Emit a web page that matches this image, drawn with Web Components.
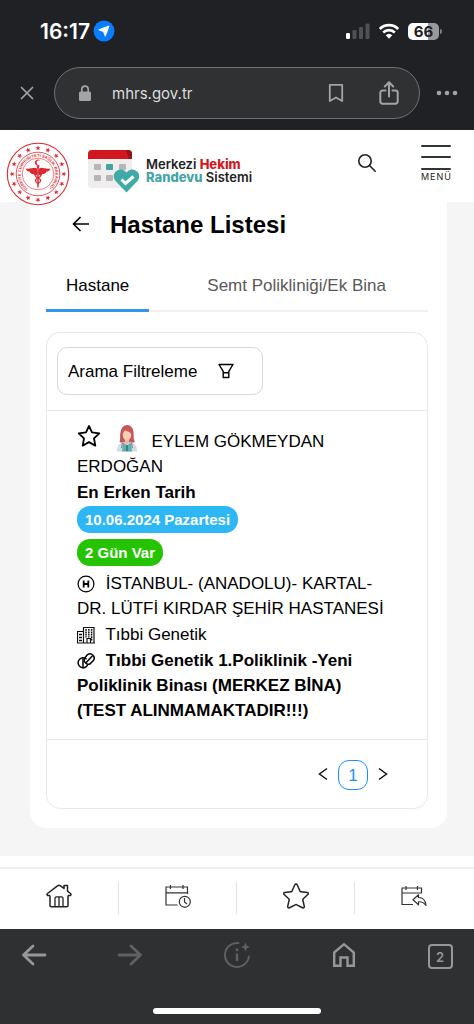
<!DOCTYPE html>
<html lang="tr">
<head>
<meta charset="utf-8">
<meta name="viewport" content="width=device-width, initial-scale=1">
<title>Hastane Listesi</title>
<style>
    body {
        margin: 0;
        background: #f5f5f5;
        color: #000;
        font-family: "Liberation Sans", Arial, sans-serif;
        font-size: 17px;
        line-height: 25px;
    }
</style>
</head>
<body>
<hospital-app></hospital-app>

<script>
// Every line icon: [viewBox, markup]
const ICONS = {
    location: ['0 0 22 22', '<circle cx="11" cy="11" r="10.5" fill="#0a7cff"/><path d="M16 6 12.3 16.2 10.6 11.6 5.8 9.8Z" fill="#fff" stroke="#fff" stroke-width="1" stroke-linejoin="round"/>'],
    signal: ['0 0 24 16', '<rect x="0" y="10" width="4" height="6" rx="1.3" fill="#fff"/><g fill="#505154"><rect x="6.5" y="7" width="4" height="9" rx="1.3"/><rect x="13" y="4" width="4" height="12" rx="1.3"/><rect x="19.5" y="0.5" width="4" height="15.5" rx="1.3"/></g>'],
    wifi: ['0 0 22 16', '<g fill="none" stroke="#fff" stroke-width="2.7"><path d="M1.8 6A13 13 0 0 1 20.2 6"/><path d="M5.2 9.5A8.3 8.3 0 0 1 16.8 9.5"/></g><path d="M7.7 12.2A4.8 4.8 0 0 1 14.3 12.2L11 15.7Z" fill="#fff"/>'],
    close: ['0 0 14 14', '<path d="M1.5 1.5 12.5 12.5M12.5 1.5 1.5 12.5" fill="none" stroke="currentColor" stroke-width="1.7" stroke-linecap="round"/>'],
    lock: ['0 0 14 16', '<rect x="1" y="6.5" width="12" height="9.5" rx="1.6" fill="currentColor"/><path d="M3.8 7V4.3a3.2 3.2 0 0 1 6.4 0V7" fill="none" stroke="currentColor" stroke-width="1.7"/>'],
    bookmark: ['0 0 16 20', '<path d="M1.8 1.8H14.2V18L8 14.5 1.8 18Z" fill="none" stroke="currentColor" stroke-width="1.8" stroke-linejoin="round"/>'],
    share: ['0 0 20 24', '<g fill="none" stroke="currentColor" stroke-width="2" stroke-linecap="round" stroke-linejoin="round"><path d="M6.5 9.5H3.5A2.2 2.2 0 0 0 1.3 11.7V20.5A2.2 2.2 0 0 0 3.5 22.7H16.5A2.2 2.2 0 0 0 18.7 20.5V11.7A2.2 2.2 0 0 0 16.5 9.5H13.5"/><path d="M10 15.5V1.5M5.8 5.5 10 1.3 14.2 5.5"/></g>'],
    dots: ['0 0 22 6', '<g fill="currentColor"><circle cx="3" cy="3" r="2.3"/><circle cx="11" cy="3" r="2.3"/><circle cx="19" cy="3" r="2.3"/></g>'],
    search: ['0 0 20 20', '<g fill="none" stroke="#222" stroke-width="1.6" stroke-linecap="round"><circle cx="8" cy="8" r="6.2"/><path d="M12.5 12.5 18.2 18.2"/></g>'],
    menu: ['0 0 30 27', '<path d="M1 2H29M1 13H29M1 25H29" stroke="#2f3633" stroke-width="2" stroke-linecap="round"/>'],
    back: ['0 0 18 18', '<path d="M17 9H1.5M8.5 2 1.5 9 8.5 16" fill="none" stroke="#000" stroke-width="1.6"/>'],
    filter: ['0 0 16 16', '<path d="M1 1.5H15L10.8 8.3V14.5H5.2V8.3ZM5.2 9.8H10.8" fill="none" stroke="#000" stroke-width="1.4" stroke-linejoin="round"/>'],
    star: ['0 0 24 24', '<path d="M12 2 15 8.4 22.3 9.4 17 14.3 18.3 21.6 12 18.1 5.7 21.6 7 14.3 1.7 9.4 9 8.4Z" fill="none" stroke="#000" stroke-width="1.8" stroke-linejoin="round"/>'],
    doctor: ['0 0 22 28', '<path d="M3.5 18C5 15 3 8.5 6 4 8.5 0 14 0 16.5 4.5 18.8 9 16.5 14.5 19 18 16 19.5 6 19.5 3.5 18Z" fill="#c4555c"/><path d="M1 27.5C1 21.5 3.5 19 8 18.3H14C18.5 19 21 21.5 21 27.5Z" fill="#d3dcdf"/><path d="M7 18.5 11 21.5 15 18.5 16 27.5H6Z" fill="#5fb0b2"/><path d="M8.8 14H13.2V18.5L11 21 8.8 18.5Z" fill="#eeb59b"/><ellipse cx="11" cy="10.8" rx="4.3" ry="5.5" fill="#f8cdb5"/><path d="M6.5 10C7.5 8.5 8 7 9 6.3 11 7.5 13.5 7 15.5 10.5 16.5 3.5 13.5 2.5 11 2.5 8 2.5 5.5 4.5 6.5 10Z" fill="#c9575b"/><path d="M11 21V27" stroke="#265d70" stroke-width="1.2"/><path d="M6.5 19 5.5 24M15.5 19 16.5 24" stroke="#6c8790" stroke-width="1" fill="none"/>'],
    hospital: ['0 0 18 18', '<circle cx="9" cy="9" r="7.9" fill="none" stroke="#000" stroke-width="1.2"/><path d="M6.7 5.5V12.5M11.3 5.5V12.5M6.7 9H11.3" stroke="#000" stroke-width="1.8" fill="none"/>'],
    building: ['0 0 18 18', '<g fill="none" stroke="#111" stroke-width="1.2"><path d="M6.5 17V1.5H17V17M.5 17V5.5H6.5M0 17H18M10 17V12.5H13.5V17"/><path d="M2 8.5H5M2 11.5H5M2 14.5H5" stroke-width="1.5"/><path d="M9 3V11.5M11.8 3V11.5M14.6 3V15" stroke-width="1.5" stroke-dasharray="1.8 .6"/></g>'],
    pills: ['0 0 18 18', '<g fill="none" stroke="#000" stroke-width="1.5"><path d="M9.6 7.2A5 5 0 1 0 10.8 12.6"/><path d="M6 6.2V16.2"/><path d="M8 5.8 10.3 2.9A4.2 4.2 0 0 1 16.2 8.8L12.8 12.1A4.2 4.2 0 0 1 8 5.8"/><path d="M9 10.8 15.3 4"/></g>'],
    prev: ['0 0 10 14', '<path d="M9 1.5 1.5 7 9 12.5" fill="none" stroke="#111" stroke-width="1.5"/>'],
    next: ['0 0 10 14', '<path d="M1 1.5 8.5 7 1 12.5" fill="none" stroke="#111" stroke-width="1.5"/>'],
    house: ['0 0 26 24', '<g fill="none" stroke="#222" stroke-width="1.5" stroke-linejoin="round"><path d="M4 11.5V21.5Q4 22.8 5.3 22.8H20.7Q22 22.8 22 21.5V11.5"/><path d="M4 11.5H1.5Q.5 10.5 1.5 9.5L11.5 1.8Q13 .8 14.5 1.8L18 4.5V1.5H21.5V7.2L24.5 9.5Q25.5 10.5 24.5 11.5H22"/><path d="M9 22.5V14.3Q9 12.8 10.5 12.8H15.5Q17 12.8 17 14.3V22.5M13 13V22.5" stroke-width="1.3"/></g>'],
    calendarClock: ['0 0 26 24', '<g fill="none" stroke="#333" stroke-width="1.2"><path d="M12.5 21H1V3H22.5V10M1 8.8H22.5M5.5 1V5M18 1V5"/><circle cx="19.8" cy="17.8" r="5.5"/><path d="M19.5 14V18L22 20"/></g>'],
    softStar: ['0 0 26 26', '<path d="M11.8 1.8Q13 0 14.2 1.8L16.8 7.8Q17.2 8.6 18 8.7L24.3 9.5Q26.2 10 24.8 11.5L20.3 15.7Q19.6 16.5 19.9 17.3L21.3 23.3Q21.4 25.4 19.5 24.7L13.8 21.8Q13 21.3 12.2 21.8L6.5 24.7Q4.6 25.4 4.7 23.3L6.1 17.3Q6.4 16.5 5.7 15.7L1.2 11.5Q-.2 10 1.7 9.5L8 8.7Q8.8 8.6 9.2 7.8Z" fill="none" stroke="#222" stroke-width="1.5"/>'],
    calendarBack: ['0 0 26 24', '<g fill="none" stroke="#333" stroke-width="1.2"><path d="M12 20.5H1V4H20.5V9.5M1 9H20.5M5 2V6M16.5 2V6"/><path d="M12 15.8 17.5 10.8V13.5C22 13.5 24.5 16 25 21.5 22.8 18.5 20.5 17.5 17.5 17.8V20.8Z" stroke-linejoin="round"/></g>'],
    left: ['0 0 26 24', '<path d="M24 12H2.5M12 3 2.5 12 12 21" fill="none" stroke="currentColor" stroke-width="2.8" stroke-linecap="round" stroke-linejoin="round"/>'],
    right: ['0 0 26 24', '<path d="M2 12H23.5M14 3 23.5 12 14 21" fill="none" stroke="currentColor" stroke-width="2.8" stroke-linecap="round" stroke-linejoin="round"/>'],
    assist: ['0 0 28 28', '<path d="M15.5 2.1A12 12 0 1 0 25.9 15.5" fill="none" stroke="currentColor" stroke-width="1.9" stroke-linecap="round"/><path d="M14 12.5V20" stroke="currentColor" stroke-width="2.4"/><circle cx="14" cy="8.8" r="1.5" fill="currentColor"/><path d="M22.5 1.5 23.8 4.7 27 6 23.8 7.3 22.5 10.5 21.2 7.3 18 6 21.2 4.7Z" fill="currentColor"/>'],
    home: ['0 0 24 26', '<path d="M2.2 10.5 12 2.2 21.8 10.5V23.8H15.5V15.5H8.5V23.8H2.2Z" fill="none" stroke="currentColor" stroke-width="2.4"/>'],
    calendarHeart: ['0 0 52 44', '<rect x="0" y="1" width="44" height="38" rx="4" fill="#efedee"/><path d="M0 10V5Q0 1 4 1H40Q44 1 44 5V10Z" fill="#d2171e"/><path d="M38 1H40Q44 1 44 5V10H41Z" fill="#94161b"/><g fill="#b6b6b8"><rect x="6" y="15" width="7" height="6" rx="1"/><rect x="31" y="15" width="7" height="6" rx="1"/><rect x="6" y="26" width="7" height="6" rx="1"/><rect x="18" y="26" width="7" height="6" rx="1"/></g><rect x="18" y="15" width="7" height="6" rx="1" fill="#43a5a3"/><path d="M38.5 43.5 27.5 32C23 26 28 20 33.5 20.5Q36.5 21 38.5 23.5 40.5 21 43.5 20.5C49 20 54 26 49.5 32Z" fill="#40aaa6"/><path d="M33.5 30.5 37.5 34.5 45.5 27.5" fill="none" stroke="#fff" stroke-width="3"/>']
};

class UiIcon extends HTMLElement {
    connectedCallback() {
        const [box, body] = ICONS[this.getAttribute('name')];
        const [, , w, h] = box.split(' ');
        this.attachShadow({ mode: 'open' });
        this.shadowRoot.innerHTML = `
            <style>
                :host { display: inline-block; flex: none; line-height: 0; }
                svg { display: block; }
            </style>
            <svg viewBox="${box}" width="${w}" height="${h}" aria-hidden="true">${body}</svg>
        `;
    }
}

class StatusBar extends HTMLElement {
    connectedCallback() {
        this.attachShadow({ mode: 'open' });
        this.shadowRoot.innerHTML = `
            <style>
                :host {
                    display: flex;
                    align-items: center;
                    justify-content: space-between;
                    height: 62px;
                    padding: 0 32px 0 40px;
                    background: #202125;
                    color: #fff;
                    font-family: Inter, sans-serif;
                }
                div { display: flex; align-items: center; }
                .time { gap: 3px; font-size: 21px; font-weight: 600; }
                .state { gap: 8px; }
                .battery {
                    width: 31px;
                    border-radius: 5px;
                    background: linear-gradient(90deg, #fff 66%, #98999b 66%);
                    color: #202125;
                    font-size: 15px;
                    font-weight: 700;
                    line-height: 17px;
                    justify-content: center;
                }
                .cell { gap: 1px; }
                .tip { width: 2px; height: 5px; border-radius: 0 2px 2px 0; background: #7d7e81; }
            </style>
            <div class="time"><span>16:17</span><ui-icon name="location"></ui-icon></div>
            <div class="state">
                <ui-icon name="signal"></ui-icon>
                <ui-icon name="wifi"></ui-icon>
                <div class="cell"><div class="battery">66</div><div class="tip"></div></div>
            </div>
        `;
    }
}

class AddressBar extends HTMLElement {
    connectedCallback() {
        this.attachShadow({ mode: 'open' });
        this.shadowRoot.innerHTML = `
            <style>
                :host {
                    display: grid;
                    grid-template-columns: 54px minmax(0, 1fr) 54px;
                    align-items: center;
                    padding: 5px 0 11px;
                    background: #202125;
                    color: #a3a4a8;
                }
                button {
                    display: flex;
                    justify-content: center;
                    padding: 0;
                    border: 0;
                    background: none;
                    color: inherit;
                }
                .field {
                    display: flex;
                    align-items: center;
                    box-sizing: border-box;
                    height: 52px;
                    padding: 0 20px 0 23px;
                    border: 1px solid #707174;
                    border-radius: 26px;
                    background: #303133;
                }
                input {
                    flex: 1;
                    min-width: 0;
                    margin-left: 20px;
                    padding: 0;
                    border: 0;
                    background: none;
                    color: #dcdddf;
                    font: 15px Inter, sans-serif;
                }
                .share { margin-left: 35px; }
            </style>
            <button aria-label="Kapat"><ui-icon name="close"></ui-icon></button>
            <div class="field">
                <ui-icon name="lock"></ui-icon>
                <input type="text" aria-label="Adres" value="mhrs.gov.tr">
                <button aria-label="Yer işareti"><ui-icon name="bookmark"></ui-icon></button>
                <button class="share" aria-label="Paylaş"><ui-icon name="share"></ui-icon></button>
            </div>
            <button aria-label="Diğer"><ui-icon name="dots"></ui-icon></button>
        `;
    }
}

class MinistrySeal extends HTMLElement {
    connectedCallback() {
        // sixteen small stars between the two outer rings
        let stars = '';
        for (let i = 0; i < 16; i++) {
            stars += `<path transform="rotate(${i * 22.5} 32 32) translate(32 6.2) scale(1.2)" d="M0-2.2.6-.7 2.1-.7 .9.3 1.3 1.8 0 .9-1.3 1.8-.9.3-2.1-.7-.6-.7Z"/>`;
        }
        this.attachShadow({ mode: 'open' });
        this.shadowRoot.innerHTML = `
            <style>
                :host { display: block; border-radius: 50%; background: #fff; }
                svg { display: block; }
                text { font: 700 4px "Liberation Sans", sans-serif; }
            </style>
            <svg viewBox="0 0 64 64" width="64" height="64" fill="#dc2a33" role="img" aria-label="Sağlık Bakanlığı">
                <g fill="none" stroke="#dc2a33">
                    <circle cx="32" cy="32" r="30.7" stroke-width="1.1"/>
                    <circle cx="32" cy="32" r="21.8" stroke-width=".8"/>
                    <circle cx="32" cy="32" r="15.8" stroke-width=".6"/>
                </g>
                ${stars}
                <defs><path id="ring" d="M22.3 46.7A17.4 17.4 0 1 1 41.7 46.7"/></defs>
                <text><textPath href="#ring">TÜRKİYE CUMHURİYETİ SAĞLIK BAKANLIĞI</textPath></text>
                <path d="M31 26.5C28 24.5 25 27.5 19.5 26.5 20.5 29 22 29.5 23.5 29.5 24 31.5 26 32 27.5 32 28.5 34 30 33.5 31 33ZM33 26.5C36 24.5 39 27.5 44.5 26.5 43.5 29 42 29.5 40.5 29.5 40 31.5 38 32 36.5 32 35.5 34 34 33.5 33 33Z"/>
                <path d="M31.2 25H32.8V44L32 46.5 31.2 44Z"/>
                <path d="M32 30C27.5 32 29 35 32 36 36 37.5 35 40 32 41.5M32 30C36.5 32 35 35 32 36 28 37.5 29 40 32 41.5" fill="none" stroke="#dc2a33" stroke-width="1.3"/>
                <path d="M34.3 22.5A3 3 0 1 1 34.3 18.8 2.3 2.3 0 1 0 34.3 22.5Z"/>
                <circle cx="32" cy="24.5" r="1.3"/>
            </svg>
        `;
    }
}

class SiteHeader extends HTMLElement {
    connectedCallback() {
        this.attachShadow({ mode: 'open' });
        this.shadowRoot.innerHTML = `
            <style>
                :host {
                    display: flex;
                    align-items: flex-start;
                    position: relative;
                    z-index: 1;
                    box-sizing: border-box;
                    height: 72px;
                    padding: 12px 22px 0 6px;
                    background: #fff;
                }
                .brand {
                    display: flex;
                    align-items: center;
                    gap: 6px;
                    margin: 7px auto 0 18px;
                    color: #222;
                    text-decoration: none;
                    font: 600 13px/13px Inter, sans-serif;
                }
                .brand span span { display: block; }
                .brand b { color: #d2171e; font-weight: 800; }
                .brand .teal { color: #43a5a3; }
                button {
                    display: flex;
                    flex-direction: column;
                    align-items: center;
                    padding: 0;
                    border: 0;
                    background: none;
                    color: #222;
                    font: 9px/10px Inter, sans-serif;
                }
                .search { margin: 11px 44px 0 0; }
                .menu { gap: 1px; margin-top: 2px; letter-spacing: 1px; }
            </style>
            <ministry-seal></ministry-seal>
            <a class="brand" href="#">
                <ui-icon name="calendarHeart"></ui-icon>
                <span>
                    <span>Merkezi <b>Hekim</b></span>
                    <span><b class="teal">Randevu</b> Sistemi</span>
                </span>
            </a>
            <button class="search" aria-label="Ara"><ui-icon name="search"></ui-icon></button>
            <button class="menu"><ui-icon name="menu"></ui-icon>MENÜ</button>
        `;
    }
}

class TabBar extends HTMLElement {
    connectedCallback() {
        this.attachShadow({ mode: 'open' });
        this.shadowRoot.innerHTML = `
            <style>
                :host {
                    display: flex;
                    gap: 38px;
                    box-shadow: inset 0 -2px #f0f0f0;
                }
                ::slotted(button) {
                    padding: 13px 20px 11px;
                    border: 0;
                    border-bottom: 3px solid transparent;
                    background: none;
                    color: #595959;
                    font: inherit;
                }
                ::slotted(button[aria-selected="true"]) {
                    border-color: #3294ea;
                    color: #000;
                }
            </style>
            <slot></slot>
        `;
    }
}

class DateBadge extends HTMLElement {
    connectedCallback() {
        this.attachShadow({ mode: 'open' });
        this.shadowRoot.innerHTML = `
            <style>
                :host {
                    display: block;
                    width: fit-content;
                    padding: 0 8px;
                    border-radius: 13px;
                    background: #2db7f5;
                    color: #fff;
                    font-size: 15px;
                    font-weight: 700;
                    line-height: 27px;
                }
                :host([tone="green"]) { background: #26c400; }
            </style>
            <slot></slot>
        `;
    }
}

class AppointmentCard extends HTMLElement {
    connectedCallback() {
        this.attachShadow({ mode: 'open' });
        this.shadowRoot.innerHTML = `
            <style>
                :host {
                    display: flex;
                    flex-direction: column;
                    gap: 1px;
                    padding: 13px 36px 16px 30px;
                }
                .badges {
                    display: grid;
                    gap: 6px;
                    padding-bottom: 4px;
                }
                .star {
                    padding: 0;
                    border: 0;
                    background: none;
                    vertical-align: -1px;
                }
                .doctor { margin: 0 9px 0 10px; vertical-align: -5px; }
                .mark { margin-right: 6px; vertical-align: -4px; }
            </style>
            <div>
                <button class="star" aria-label="Favorilere ekle"><ui-icon name="star"></ui-icon></button>
                <ui-icon class="doctor" name="doctor"></ui-icon>
                <slot name="doctor"></slot>
            </div>
            <b>En Erken Tarih</b>
            <div class="badges"><slot name="badge"></slot></div>
            <div><ui-icon class="mark" name="hospital"></ui-icon> <slot name="hospital"></slot></div>
            <div><ui-icon class="mark" name="building"></ui-icon> <slot name="clinic"></slot></div>
            <b><ui-icon class="mark" name="pills"></ui-icon> <slot name="room"></slot></b>
        `;
    }
}

class PageSwitcher extends HTMLElement {
    connectedCallback() {
        this.attachShadow({ mode: 'open' });
        this.shadowRoot.innerHTML = `
            <style>
                :host {
                    display: flex;
                    align-items: center;
                    justify-content: flex-end;
                    gap: 10px;
                    padding: 20px 39px 18px;
                    border-top: 1px solid #e8e8e8;
                }
                button { display: block; padding: 0; border: 0; background: none; }
                .current {
                    box-sizing: border-box;
                    width: 30px;
                    height: 30px;
                    border: 1px solid #1890ff;
                    border-radius: 11px;
                    color: #1890ff;
                    font: inherit;
                }
            </style>
            <button aria-label="Önceki"><ui-icon name="prev"></ui-icon></button>
            <button class="current">1</button>
            <button aria-label="Sonraki"><ui-icon name="next"></ui-icon></button>
        `;
    }
}

class SiteNav extends HTMLElement {
    connectedCallback() {
        this.attachShadow({ mode: 'open' });
        this.shadowRoot.innerHTML = `
            <style>
                :host { display: block; padding-top: 11px; background: #fff; }
                nav {
                    display: grid;
                    grid-template-columns: repeat(4, 1fr);
                    padding: 13px 2px 15px 0;
                    border-top: 2px solid #f0f0f0;
                }
                a {
                    display: flex;
                    align-items: center;
                    justify-content: center;
                    box-sizing: border-box;
                    height: 32px;
                    padding-bottom: 4px;
                }
                a + a { border-left: 1px solid #e2e2e2; }
            </style>
            <nav>
                <a href="#" aria-label="Ana sayfa"><ui-icon name="house"></ui-icon></a>
                <a href="#" aria-label="Randevularım"><ui-icon name="calendarClock"></ui-icon></a>
                <a href="#" aria-label="Favoriler"><ui-icon name="softStar"></ui-icon></a>
                <a href="#" aria-label="Geçmiş"><ui-icon name="calendarBack"></ui-icon></a>
            </nav>
        `;
    }
}

class BrowserToolbar extends HTMLElement {
    connectedCallback() {
        this.attachShadow({ mode: 'open' });
        this.shadowRoot.innerHTML = `
            <style>
                :host { display: block; padding-bottom: 10px; background: #2f3032; color: #96979b; }
                .row {
                    display: grid;
                    grid-template-columns: 68fr 124fr 90fr 124fr 68fr;
                    align-items: center;
                    justify-items: center;
                    height: 55px;
                }
                button {
                    display: block;
                    padding: 0;
                    border: 0;
                    background: none;
                    color: inherit;
                }
                .dim { color: #606164; }
                .tabs {
                    box-sizing: border-box;
                    width: 25px;
                    height: 25px;
                    border: 2px solid;
                    border-radius: 4px;
                    font: 600 13px/20px Inter, sans-serif;
                }
                .handle {
                    width: 168px;
                    height: 6px;
                    margin: 24px auto 0;
                    border-radius: 3px;
                    background: #fff;
                }
            </style>
            <div class="row">
                <button aria-label="Geri"><ui-icon name="left"></ui-icon></button>
                <button class="dim" aria-label="İleri"><ui-icon name="right"></ui-icon></button>
                <button class="dim" aria-label="Asistan"><ui-icon name="assist"></ui-icon></button>
                <button aria-label="Ana ekran"><ui-icon name="home"></ui-icon></button>
                <button class="tabs">2</button>
            </div>
            <div class="handle"></div>
        `;
    }
}

class HospitalApp extends HTMLElement {
    connectedCallback() {
        this.attachShadow({ mode: 'open' });
        this.shadowRoot.innerHTML = `
            <style>
                :host { display: flex; flex-direction: column; min-height: 100vh; }
                main { flex: 1; padding: 0 27px 27px 30px; }
                .sheet {
                    padding: 8px 19px 19px 16px;
                    border-radius: 0 0 16px 16px;
                    background: #fff;
                }
                .title {
                    display: flex;
                    align-items: center;
                    gap: 20px;
                    padding-left: 26px;
                }
                .title button { padding: 0; border: 0; background: none; }
                h1 { margin: 0; font-size: 24px; line-height: 30px; }
                tab-bar { margin: 20px 0; }
                .panel {
                    border: 1px solid #e8e8e8;
                    border-radius: 14px;
                }
                .tools { padding: 14px 10px 15px; border-bottom: 1px solid #e8e8e8; }
                .filter {
                    display: flex;
                    align-items: center;
                    gap: 21px;
                    box-sizing: border-box;
                    width: 206px;
                    height: 48px;
                    padding: 0 10px;
                    border: 1px solid #d9d9d9;
                    border-radius: 10px;
                    background: #fff;
                    color: #000;
                    font: inherit;
                }
            </style>
            <status-bar></status-bar>
            <address-bar></address-bar>
            <site-header></site-header>
            <main>
                <div class="sheet">
                    <div class="title">
                        <button aria-label="Geri dön"><ui-icon name="back"></ui-icon></button>
                        <h1>Hastane Listesi</h1>
                    </div>
                    <tab-bar role="tablist">
                        <button role="tab" aria-selected="true">Hastane</button>
                        <button role="tab" aria-selected="false">Semt Polikliniği/Ek Bina</button>
                    </tab-bar>
                    <section class="panel">
                        <div class="tools">
                            <button class="filter">Arama Filtreleme <ui-icon name="filter"></ui-icon></button>
                        </div>
                        <appointment-card>
                            <span slot="doctor">EYLEM GÖKMEYDAN ERDOĞAN</span>
                            <date-badge slot="badge">10.06.2024 Pazartesi</date-badge>
                            <date-badge slot="badge" tone="green">2 Gün Var</date-badge>
                            <span slot="hospital">İSTANBUL- (ANADOLU)- KARTAL- DR. LÜTFİ KIRDAR ŞEHİR HASTANESİ</span>
                            <span slot="clinic">Tıbbi Genetik</span>
                            <span slot="room">Tıbbi Genetik 1.Poliklinik -Yeni Poliklinik Binası (MERKEZ BİNA) (TEST ALINMAMAKTADIR!!!)</span>
                        </appointment-card>
                        <page-switcher></page-switcher>
                    </section>
                </div>
            </main>
            <site-nav></site-nav>
            <browser-toolbar></browser-toolbar>
        `;
    }
}

customElements.define('ui-icon', UiIcon);
customElements.define('status-bar', StatusBar);
customElements.define('address-bar', AddressBar);
customElements.define('ministry-seal', MinistrySeal);
customElements.define('site-header', SiteHeader);
customElements.define('tab-bar', TabBar);
customElements.define('date-badge', DateBadge);
customElements.define('appointment-card', AppointmentCard);
customElements.define('page-switcher', PageSwitcher);
customElements.define('site-nav', SiteNav);
customElements.define('browser-toolbar', BrowserToolbar);
customElements.define('hospital-app', HospitalApp);
</script>
</body>
</html>
